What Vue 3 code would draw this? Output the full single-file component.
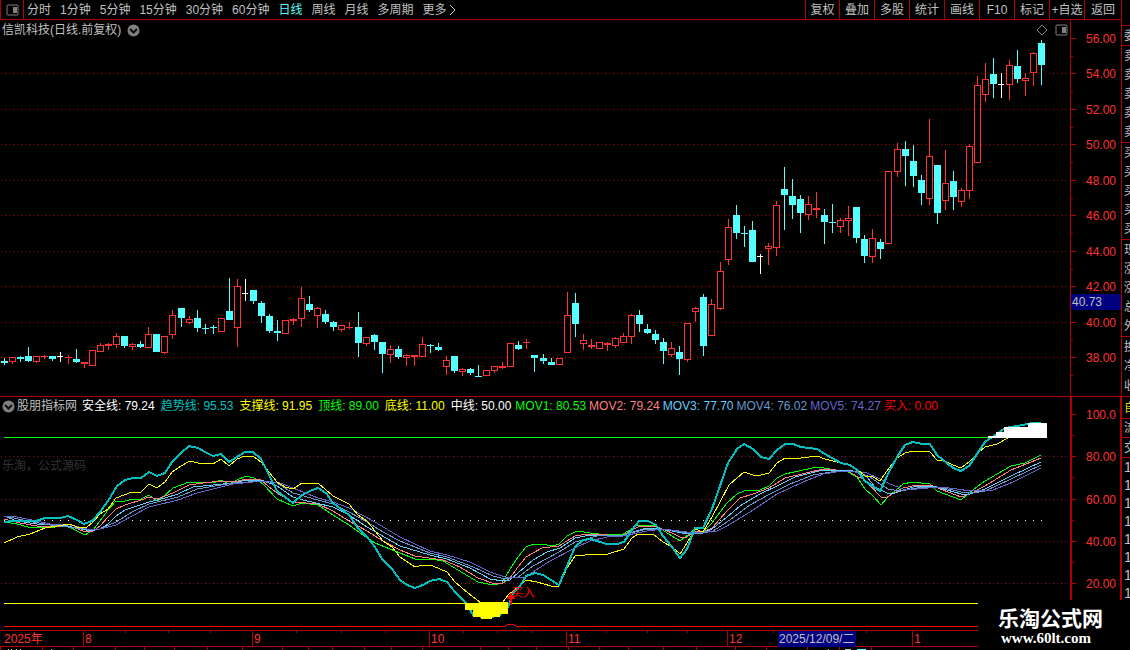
<script setup>
import { ref } from 'vue'

const periods = ['分时', '1分钟', '5分钟', '15分钟', '30分钟', '60分钟', '日线', '周线', '月线', '多周期', '更多']
const active = ref('日线')
const tools = ['复权', '叠加', '多股', '统计', '画线', 'F10', '标记', '+自选', '返回']

const prices = ['56.00', '54.00', '52.00', '50.00', '48.00', '46.00', '44.00', '42.00', '40.00', '38.00']
const levels = ['100.0', '80.00', '60.00', '40.00', '20.00']
const priceGrid = [73, 109, 144, 180, 215, 251, 286, 322, 357]
const priceTicks = [38, ...priceGrid]
const levelGrid = [456, 499, 541, 583]
const levelTicks = [414, ...levelGrid]

// kind (r rise, c fall, w flat), high, body top, body bottom, low
const raw = `c358 361 363 365|r357 357 362 364|c356 357 359 362|c347 356 361 362|r356 356 362 363|r355 356 357 359|c356 356 359 361|w352 356 357 362|r355 357 358 364|c349 359 362 363|r362 362 364 368|r350 350 366 366|r343 345 352 352|r343 344 346 350|r333 336 345 348|c336 336 346 348|r343 344 347 350|c341 344 347 348|r327 334 348 348|c334 334 352 352|r336 336 353 354|r310 315 335 339|c308 308 318 327|r316 319 323 324|c310 318 328 332|c324 328 329 334|c325 327 328 334|r318 318 332 332|c278 311 320 320|r279 286 328 347|w279 293 294 301|c290 290 301 304|c301 303 316 323|c314 316 331 333|c320 331 333 341|r320 320 334 334|r318 319 321 325|r287 298 319 327|c296 304 310 312|r307 308 316 328|c310 314 322 324|c321 322 327 331|r325 325 330 332|r322 327 328 329|c312 327 343 357|r337 337 344 346|c334 335 342 350|c342 342 354 373|r345 349 355 363|c346 349 357 359|r354 355 358 366|r355 355 357 366|r337 344 357 357|c344 345 346 353|c343 347 350 351|r356 360 367 375|c356 356 371 373|r368 369 372 376|c368 369 373 375|c365 376 377 377|r370 370 376 376|r366 366 371 373|r362 366 368 369|r343 343 367 367|c341 345 349 350|r339 342 343 349|c355 355 358 372|c354 358 361 364|c358 362 365 365|r358 358 365 365|r292 315 353 353|c293 303 324 337|r334 340 344 350|r339 345 347 349|r342 342 349 349|r342 343 345 351|r337 338 346 348|r333 336 343 343|r314 315 337 344|c310 315 324 332|c324 329 333 334|c330 334 340 344|c338 342 351 364|r342 348 355 357|c346 352 359 375|r323 323 360 362|r307 308 312 322|c294 297 346 356|r299 304 336 336|r262 271 309 310|r219 227 260 265|c205 215 233 239|c226 233 234 247|c221 230 262 262|w254 256 257 274|r243 246 249 265|r201 205 248 256|c167 189 195 230|c179 196 205 219|c195 199 213 233|r196 204 215 220|r192 208 210 218|c209 215 222 244|c204 222 223 233|r218 220 227 233|r206 218 221 236|c207 207 238 243|c235 239 256 263|r229 238 257 263|c239 242 249 259|r171 171 244 244|r143 149 172 177|c141 149 156 186|c145 161 176 187|c175 180 193 205|r119 156 199 205|c165 165 213 224|r150 183 201 210|c171 181 197 210|r188 190 202 207|r144 146 191 199|r76 85 163 163|r63 79 95 102|c58 74 84 98|w73 84 85 98|r60 65 85 100|c50 66 79 83|r73 78 81 96|r52 53 73 86|c40 43 65 85`
const breaks = [22, 44, 67, 89, 111]
const candles = raw.split('|').map((item, i) => {
  const [high, top, bottom, low] = item.slice(1).split(' ').map(Number)
  const x = 4 + 8 * i + breaks.filter(b => i >= b).length
  return { kind: item[0], x, high, top, bottom, low, hollow: item[0] === 'r' && bottom - top > 2 }
})

const curves = [
  { name: 'mov1', points: '4,522 17,524 28,527 55,527 68,526 77,531 85,535 93,530 100,521 108,510 116,501 125,501 133,499 141,499 149,495 157,501 163,497 173,488 189,482 213,483 221,480 229,484 237,480 246,476 254,478 263,484 277,499 293,506 302,503 318,505 333,515 349,525 363,535 375,543 400,553 415,559 430,559 443,561 478,582 493,585 502,583 510,569 518,557 526,547 533,544 547,545 553,546 559,544 567,536 577,531 590,533 607,535 623,534 638,525 655,525 672,536 680,541 688,535 695,529 703,532 712,523 727,503 737,494 744,491 760,490 769,486 777,478 785,474 817,467 830,469 848,472 857,477 865,489 873,496 881,505 888,497 903,484 912,482 930,484 937,491 953,497 961,500 969,493 985,481 1011,466 1025,463 1041,455' },
  { name: 'mov2', points: '4,519 20,523 37,526 68,526 78,529 85,532 93,531 100,526 108,517 116,509 125,505 141,500 149,497 157,499 173,493 189,485 203,483 221,481 233,482 247,479 261,480 269,487 280,495 293,502 318,504 333,511 349,521 367,531 383,541 400,550 415,556 443,560 460,567 478,578 495,584 503,583 510,578 518,567 526,557 542,548 559,546 575,536 587,534 607,535 623,535 638,527 655,526 672,533 680,537 687,537 695,531 703,532 712,528 727,511 740,498 753,494 769,488 785,478 823,469 848,471 858,477 864,479 881,497 887,497 903,488 917,485 930,485 961,497 970,494 985,486 1011,470 1041,458' },
  { name: 'mov3', points: '4,516 17,521 37,524 68,526 90,531 100,529 108,524 116,516 125,510 149,502 165,498 178,494 193,487 233,483 247,480 261,480 277,486 293,497 303,500 333,507 349,515 367,527 400,546 430,555 447,559 470,568 490,579 503,581 510,580 518,573 533,560 547,552 560,548 575,538 590,535 623,535 643,529 655,528 672,531 687,534 695,532 703,533 712,529 727,517 740,506 760,494 777,486 795,477 823,470 853,471 867,477 875,487 887,493 895,493 913,487 933,486 961,494 970,494 985,489 1011,476 1041,462' },
  { name: 'mov4', points: '4,516 28,521 50,525 85,529 100,529 116,522 132,512 149,504 178,497 197,489 233,483 263,481 277,483 293,493 318,500 333,504 349,512 367,522 383,532 400,541 430,553 447,557 473,567 493,576 505,579 518,577 533,566 559,552 575,542 597,536 623,535 643,530 663,529 687,533 703,533 713,531 727,522 750,505 770,494 790,484 813,475 837,471 858,472 870,477 880,484 888,489 900,491 923,487 940,487 961,492 973,493 985,491 1011,479 1041,465' },
  { name: 'mov5', points: '4,516 17,517 37,521 50,524 70,525 87,529 100,529 116,525 132,516 149,507 178,500 197,493 233,484 263,481 280,483 293,488 318,498 333,502 349,508 375,522 400,537 430,551 447,555 470,562 490,572 505,577 523,578 533,572 550,561 575,548 590,541 607,537 623,536 647,531 663,529 687,532 703,532 717,531 727,526 750,512 777,494 803,482 823,474 843,471 867,473 880,479 890,484 903,489 917,489 940,487 957,489 970,491 993,490 1013,482 1041,468' },
  { name: 'support', points: '4,543 17,537 30,534 45,528 57,526 70,524 77,527 87,527 93,522 100,514 108,509 116,498 132,492 141,492 149,484 157,488 165,482 172,472 181,466 190,461 198,463 213,464 221,459 229,466 237,459 245,456 253,456 261,462 269,472 277,482 285,487 293,489 302,483 318,483 333,496 349,504 358,515 367,521 375,531 383,541 392,547 400,557 415,567 423,565 433,566 447,572 455,582 468,593 480,602 503,602 508,595 518,587 526,580 537,582 551,586 559,586 567,568 575,556 585,555 608,554 624,549 632,538 638,534 653,534 663,542 672,547 680,554 687,543 695,529 703,532 712,517 729,485 737,478 744,472 753,475 761,475 769,473 777,463 785,458 801,458 817,456 825,459 841,463 848,464 857,469 865,476 873,477 880,481 889,468 897,458 905,453 913,451 930,452 937,460 945,461 953,465 961,468 969,462 978,453 985,447 997,444 1008,438' },
  { name: 'trend', points: '4,522 12,521 36,521 45,518 60,518 68,516 77,520 84,524 92,521 100,512 108,501 117,486 125,480 133,478 141,478 149,472 157,476 165,473 172,462 181,453 189,446 198,448 205,452 213,456 221,454 229,462 237,457 245,452 253,452 261,459 269,475 277,491 293,503 302,495 310,491 318,488 326,493 333,503 349,515 358,528 367,537 375,547 382,559 392,569 400,580 407,585 415,588 423,585 430,581 439,579 447,582 455,592 466,603 473,615 487,618 500,615 508,607 513,593 520,586 526,576 535,573 543,575 551,580 559,585 567,566 575,547 583,540 591,539 600,542 607,544 617,544 624,542 632,530 639,521 648,521 656,525 663,536 672,547 680,558 687,549 695,528 703,528 712,509 720,486 728,463 737,449 744,444 753,449 761,457 769,459 777,450 785,444 793,444 801,447 817,449 825,454 841,463 850,465 857,470 865,481 880,491 889,472 897,457 905,445 913,442 922,444 930,444 937,455 953,468 961,471 969,466 977,454 985,442 992,437 997,434 1005,428 1017,426 1028,424 1033,423 1041,423' }
]

const levelLegend = [
  { label: '安全线', value: '79.24', tone: 'white' },
  { label: '趋势线', value: '95.53', tone: 'teal' },
  { label: '支撑线', value: '91.95', tone: 'yellow' },
  { label: '顶线', value: '89.00', tone: 'green' },
  { label: '底线', value: '11.00', tone: 'yellow' },
  { label: '中线', value: '50.00', tone: 'white' }
]
const movLegend = [
  { label: 'MOV1', value: '80.53', tone: 'green' },
  { label: 'MOV2', value: '79.24', tone: 'pink' },
  { label: 'MOV3', value: '77.70', tone: 'sky' },
  { label: 'MOV4', value: '76.02', tone: 'steel' },
  { label: 'MOV5', value: '74.27', tone: 'violet' },
  { label: '买入', value: '0.00', tone: 'red' }
]

const quoteGroups = [
  { size: 'blank', rows: [] },
  { size: 'head', rows: ['委'] },
  { size: 'five', rows: ['卖', '卖', '卖', '卖', '卖'] },
  { size: 'five', rows: ['买', '买', '买', '买', '买'] },
  { size: 'five', rows: ['现', '涨', '涨', '总', '外'] },
  { size: 'three', rows: ['换', '净', '收'] },
  { size: 'own', rows: ['自'] },
  { size: 'single', rows: ['流'] },
  { size: 'head', rows: ['交'] },
  { size: 'prints', rows: ['1', '1', '1', '1', '1', '1', '1', '1'] }
]

const weekTicks = [125, 168, 210, 296, 341, 385, 463, 497, 532, 606, 647, 687, 773, 866]
const footTicks = [0, 42, 73, 115, 144, 174, 207, 242, 282, 308, 332, 364, 391, 422, 480, 508, 536, 568, 599, 628, 663, 696, 735, 766, 807, 839, 871]
</script>

<template>
  <div class="terminal">
    <div class="workspace">
      <header class="toolbar">
        <button class="panel-button" aria-label="侧栏">
          <svg width="13" height="12" viewBox="0 0 13 12"><rect x="1" y="1" width="11" height="10" rx="1" /><path class="solid" d="M7 3h4v6h-4z" /></svg>
        </button>
        <nav class="periods">
          <button v-for="p in periods" :key="p" :class="{ active: p === active }" @click="active = p">
            {{ p }}<svg v-if="p === '更多'" width="9" height="12" viewBox="0 0 9 12"><path d="M3 1l5 5-5 5" /></svg>
          </button>
        </nav>
        <div class="tools">
          <button v-for="t in tools" :key="t">{{ t }}</button>
        </div>
      </header>

      <main class="charts">
        <section class="panel price-panel">
          <svg class="plot" viewBox="0 20 1070 376" preserveAspectRatio="none">
            <line v-for="y in priceGrid" :key="y" class="grid" x1="1" :y1="y + 0.5" x2="1068" :y2="y + 0.5" />
            <g v-for="c in candles" :key="c.x" :class="['candle', c.kind]">
              <rect v-if="c.high < c.top" :x="c.x" :y="c.high" width="1" :height="c.top - c.high" />
              <rect v-if="c.low > c.bottom" :x="c.x" :y="c.bottom" width="1" :height="c.low - c.bottom" />
              <rect v-if="c.hollow" class="hollow" :x="c.x - 2.5" :y="c.top + 0.5" width="6" :height="c.bottom - c.top - 1" />
              <rect v-else :x="c.x - 3" :y="c.top" :width="c.kind === 'w' ? 6 : 7" :height="c.bottom - c.top" />
            </g>
          </svg>
          <div class="caption">
            <h1>信凯科技(日线.前复权)</h1>
            <button class="round" aria-label="展开"><svg width="13" height="13" viewBox="0 0 13 13"><circle cx="6.5" cy="6.5" r="6" /><path d="M3 5l3.500 3.500L10 5" /></svg></button>
            <span class="marks">
              <svg width="12" height="12" viewBox="0 0 12 12"><path d="M6 1l5 5-5 5-5-5z" /></svg>
              <svg width="13" height="12" viewBox="0 0 13 12"><rect x="1" y="1" width="11" height="10" rx="1" /><path class="solid" d="M7 3h4v6h-4z" /></svg>
            </span>
          </div>
        </section>
        <aside class="axis price-axis">
          <svg class="ticks" viewBox="0 20 8 376" preserveAspectRatio="none">
            <template v-for="y in priceTicks" :key="y">
              <rect x="0" :y="y" width="5" height="1" />
              <rect x="0" :y="y + 18" width="2" height="1" />
            </template>
          </svg>
          <div class="labels"><span v-for="p in prices" :key="p">{{ p }}</span></div>
          <output class="cursor-price">40.73</output>
        </aside>

        <section class="panel indicator-panel">
          <svg class="plot" viewBox="0 397 1070 233" preserveAspectRatio="none">
            <line v-for="y in levelGrid" :key="y" class="grid dim" x1="1" :y1="y + 0.5" x2="1068" :y2="y + 0.5" />
            <line class="top-line" x1="4" y1="437.5" x2="1046" y2="437.5" />
            <line class="bottom-line" x1="4" y1="603.5" x2="1046" y2="603.5" />
            <polyline class="signal" points="4,626.5 504,626.5 508,624.5 513,624.5 517,626.5 1046,626.5" />
            <rect v-for="c in candles" :key="c.x" class="middle" :x="c.x" y="520" width="1" height="1" />
            <polyline v-for="c in curves" :key="c.name" :class="['curve', c.name]" :points="c.points" />
            <path class="oversold" d="M465 603h14v-1h29v12h-8v3h-8v2h-11v-2h-8v-7h-8z" />
            <path class="overbought" d="M988 438v-2h8v-4h8v-5h24v-4h19v15z" />
            <path class="arrow" d="M511 592l4 7h-3v6h-2v-6h-3z" />
            <text class="buy" x="511" y="597">买入</text>
          </svg>
          <div class="legend">
            <button class="round" aria-label="指标"><svg width="13" height="13" viewBox="0 0 13 13"><circle cx="6.5" cy="6.5" r="6" /><path d="M3 5l3.500 3.500L10 5" /></svg></button>
            <h2>股朋指标网</h2>
            <div class="readings wide"><span v-for="l in levelLegend" :key="l.label" :class="l.tone">{{ l.label }}: {{ l.value }}</span></div>
            <div class="readings"><span v-for="l in movLegend" :key="l.label" :class="l.tone">{{ l.label }}: {{ l.value }}</span></div>
          </div>
          <p class="source">乐淘，公式源码</p>
        </section>
        <aside class="axis level-axis">
          <svg class="ticks" viewBox="0 397 8 233" preserveAspectRatio="none">
            <template v-for="y in levelTicks" :key="y">
              <rect x="0" :y="y" width="4" height="1" />
              <rect x="0" :y="y + 21" width="2" height="1" />
            </template>
          </svg>
          <div class="labels"><span v-for="l in levels" :key="l">{{ l }}</span></div>
        </aside>
      </main>
    </div>

    <aside class="quotes">
      <div v-for="(g, i) in quoteGroups" :key="i" :class="['group', g.size]">
        <span v-for="(r, j) in g.rows" :key="j">{{ r }}</span>
      </div>
    </aside>

    <footer class="timeline">
      <div class="months">
        <span class="year">2025年</span><span>8</span><span>9</span><span>10</span><span>11</span><span>12</span>
        <time class="cursor-date">2025/12/09/二</time><i></i><span>1</span>
      </div>
      <svg class="weeks" viewBox="0 630 1130 20" preserveAspectRatio="none">
        <rect v-for="x in weekTicks" :key="x" :x="x" y="631" width="1" height="2" />
        <rect v-for="x in footTicks" :key="x" :x="x" y="647" width="1" height="3" />
        <path class="pale" d="M8 649h1v1h-1zM11 649h1v1h-1zM16 649h1v1h-1zM20 649h1v1h-1zM51 649h1v1h-1zM828 649h1v1h-1zM845 649h6v1h-6z" />
        <path class="bright" d="M857 649h9v1h-9z" />
      </svg>
    </footer>

    <a class="brand" href="#"><strong>乐淘公式网</strong><span>www.60lt.com</span></a>
  </div>
</template>

<style>
body {
  margin: 0;
  background: #000;
}
</style>

<style scoped>
.terminal {
  position: relative;
  display: grid;
  grid-template-columns: minmax(0, 1fr) 9px;
  grid-template-rows: minmax(0, 1fr) 20px;
  height: 100vh;
  min-height: 480px;
  overflow: hidden;
  background: #000;
  color: #c0c0c0;
  font: 12px/16px "Liberation Sans", "Noto Sans CJK SC", sans-serif;
}
button {
  padding: 0;
  border: 0;
  background: none;
  color: inherit;
  font: inherit;
  white-space: nowrap;
  cursor: pointer;
}
svg {
  display: block;
}
.workspace {
  display: flex;
  flex-direction: column;
  min-width: 0;
  min-height: 0;
}
.toolbar {
  display: flex;
  flex: none;
  height: 19px;
  border-bottom: 1px solid #b00000;
}
.panel-button {
  display: grid;
  place-items: center;
  box-sizing: border-box;
  width: 24px;
  border: solid #b00000;
  border-width: 0 1px;
}
.panel-button svg,
.marks svg {
  fill: none;
  stroke: #808080;
}
.panel-button .solid,
.marks .solid {
  fill: #808080;
  stroke: none;
}
.periods {
  display: flex;
  gap: 9px;
  padding-left: 3px;
}
.periods button {
  display: flex;
  align-items: center;
}
.periods svg {
  fill: none;
  stroke: #c0c0c0;
}
.periods .active {
  color: #54ffff;
}
.tools {
  display: flex;
  margin-left: auto;
}
.tools button {
  box-sizing: border-box;
  width: 35px;
  border-left: 1px solid #b00000;
}
.tools button:first-child {
  width: 34px;
}
.tools button:last-child {
  width: 37px;
}
.charts {
  flex: 1;
  display: grid;
  grid-template-columns: minmax(0, 1fr) 51px;
  grid-template-rows: minmax(0, 377fr) minmax(0, 233fr);
  min-height: 0;
}
.panel {
  position: relative;
  min-width: 0;
  min-height: 0;
}
.price-panel,
.price-axis {
  border-bottom: 1px solid #b00000;
}
.plot {
  position: absolute;
  inset: 0;
  width: 100%;
  height: 100%;
  shape-rendering: crispEdges;
}
.grid {
  stroke: #b00000;
  stroke-dasharray: 1 3;
}
.grid.dim {
  stroke: #901818;
}
.candle.r {
  fill: #ff3232;
}
.candle.c {
  fill: #54ffff;
}
.candle.w {
  fill: #fff;
}
.candle .hollow {
  fill: #000;
  stroke: #ff3232;
}
.caption {
  position: relative;
  display: flex;
  align-items: center;
  gap: 6px;
  padding: 2px 2px 0;
}
h1,
h2,
p {
  margin: 0;
  font: inherit;
}
.round circle {
  fill: #808080;
}
.round path {
  fill: none;
  stroke: #101010;
  stroke-width: 2;
}
.marks {
  display: flex;
  gap: 7px;
  margin-left: auto;
}
.axis {
  position: relative;
  min-height: 0;
  border-left: 1px solid #b00000;
  color: #ff3232;
}
.ticks {
  position: absolute;
  inset: 0 auto 0 0;
  width: 8px;
  height: 100%;
  fill: #b00000;
}
.labels {
  box-sizing: border-box;
  display: flex;
  flex-direction: column;
  justify-content: space-between;
  align-items: flex-end;
  height: 100%;
  padding: 11px 5px 30px 0;
}
.level-axis {
  border-width: 0 1px 0 2px;
  border-style: solid;
  border-color: #b00000;
}
.level-axis .labels {
  padding: 10px 4px 38px 0;
}
.cursor-price {
  position: absolute;
  bottom: 23%;
  left: 0;
  right: 0;
  padding-left: 1px;
  background: #000080;
  color: #c0c0c0;
}
.top-line {
  stroke: #00ff00;
}
.bottom-line {
  stroke: #ffff00;
}
.signal {
  fill: none;
  stroke: #ff0000;
}
.middle,
.overbought {
  fill: #fff;
}
.oversold {
  fill: #ffff00;
}
.arrow,
.buy {
  fill: #ff0000;
}
.curve {
  fill: none;
  stroke-width: 1;
}
.curve.mov1 { stroke: #00ff00; }
.curve.mov2 { stroke: #ff8080; }
.curve.mov3 { stroke: #66ccff; }
.curve.mov4 { stroke: #6699cc; }
.curve.mov5 { stroke: #6666cc; }
.curve.support { stroke: #ffff00; }
.curve.trend {
  stroke: #00c0c0;
  stroke-width: 2;
}
.legend {
  position: relative;
  display: flex;
  align-items: center;
  padding: 1px 0 0 2px;
  white-space: nowrap;
}
.legend h2 {
  margin: 0 5px 0 2px;
}
.readings {
  display: flex;
  gap: 3px;
}
.readings.wide {
  gap: 6px;
  margin-right: 4px;
}
.white { color: #fff; }
.teal { color: #00c0c0; }
.yellow { color: #ffff00; }
.green { color: #00ff00; }
.pink { color: #ff8080; }
.sky { color: #66ccff; }
.steel { color: #6699cc; }
.violet { color: #6666cc; }
.red { color: #ff0000; }
.source {
  position: relative;
  padding: 44px 0 0 2px;
  color: #333;
}
.quotes {
  min-height: 0;
  overflow: hidden;
}
.group {
  box-sizing: border-box;
  display: flex;
  flex-direction: column;
  justify-content: space-around;
  padding-left: 2px;
  overflow: hidden;
  border-left: 1px solid #b00000;
  border-bottom: 1px solid #b00000;
}
.blank { height: 26px; }
.head { height: 20px; }
.five { height: 97px; }
.three { height: 60px; }
.own {
  height: 22px;
  color: #e0d020;
}
.single { height: 19px; }
.prints span {
  height: 18px;
  font-size: 14px;
  line-height: 18px;
}
.timeline {
  position: relative;
  grid-column: 1 / -1;
}
.months {
  box-sizing: border-box;
  display: grid;
  grid-template-columns:
    minmax(0, 83fr) minmax(0, 169fr) minmax(0, 177fr) minmax(0, 137fr) minmax(0, 161fr) minmax(0, 51fr)
    minmax(0, 78fr) minmax(0, 56fr) minmax(0, 218fr);
  height: 17px;
  border: solid #b00000;
  border-width: 1px 0;
  color: #ff3232;
  line-height: 16px;
}
.months span {
  padding-left: 1px;
  border-left: 1px solid #b00000;
}
.months .year {
  padding-left: 4px;
  border: 0;
}
.cursor-date {
  padding-left: 1px;
  background: #000080;
  color: #c0c0c0;
  white-space: nowrap;
}
.weeks {
  position: absolute;
  inset: 0;
  width: 100%;
  height: 100%;
  fill: #b00000;
  shape-rendering: crispEdges;
}
.pale {
  fill: #c0c0c0;
}
.bright {
  fill: #54ffff;
}
.brand {
  position: absolute;
  right: 0;
  bottom: 0;
  box-sizing: border-box;
  display: flex;
  flex-direction: column;
  width: 152px;
  height: 50px;
  padding: 5px 0 0 20px;
  background: #000;
  color: #fff;
  text-decoration: none;
}
.brand strong {
  font: bold 21px/25px "Noto Sans CJK SC", sans-serif;
}
.brand span {
  padding-left: 3px;
  font: bold 15px/17px "Liberation Serif", serif;
}
</style>
